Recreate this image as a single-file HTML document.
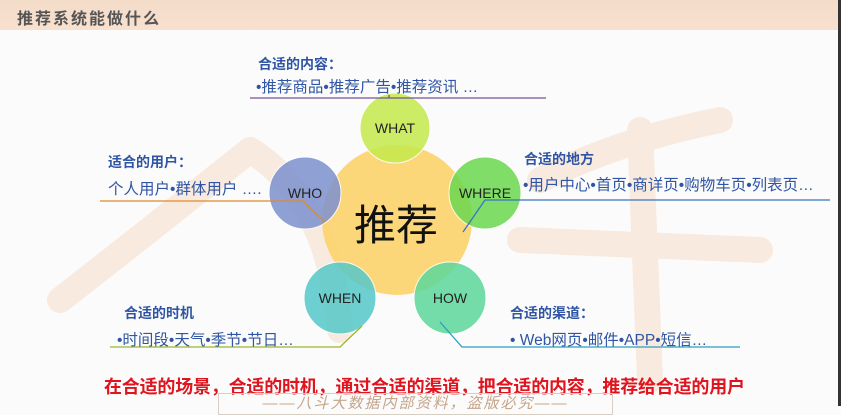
<!DOCTYPE html>
<html><head><meta charset="utf-8"><style>
body{margin:0;width:841px;height:406px;overflow:hidden;background:#fbfbfb;font-family:"Liberation Sans","Noto Sans CJK SC",sans-serif;position:relative}
.hdr{position:absolute;left:0;top:0;width:838px;height:30px;background:linear-gradient(#f3dcc8,#f8e0cf);}
.hdr span{position:absolute;left:17px;top:5px;font-size:16px;font-weight:bold;color:#555;letter-spacing:2px}
.rb{position:absolute;right:0;top:0;width:3px;height:406px;background:#333}
.t{position:absolute;white-space:nowrap;color:#2f55a4;font-size:15.5px}
.b{font-weight:bold;font-size:14px}
</style></head><body>
<div class="hdr"><span>推荐系统能做什么</span></div>
<div class="rb"></div>
<svg width="841" height="406" style="position:absolute;left:0;top:0">
<g stroke="#f7e3d3" stroke-width="26" fill="none" stroke-linecap="round" opacity="0.7">
<path d="M60 300 Q150 230 250 150"/>
<path d="M250 150 Q330 200 340 330"/>
<path d="M540 180 Q620 140 720 120"/>
<path d="M520 240 L760 250"/>
<path d="M640 130 L650 380"/>
</g>
<circle cx="397" cy="220" r="75" fill="#fcd36a" opacity="0.9"/>
<circle cx="395" cy="128" r="35" fill="#c5ea4c" opacity="0.85" stroke="#fff"/>
<circle cx="305" cy="193" r="36" fill="#7d91cf" opacity="0.85" stroke="#fff"/>
<circle cx="485" cy="193" r="36" fill="#6bd84f" opacity="0.85" stroke="#fff"/>
<circle cx="340" cy="298" r="36" fill="#55c8c8" opacity="0.85" stroke="#fff"/>
<circle cx="450" cy="298" r="36" fill="#5cd79a" opacity="0.85" stroke="#fff"/>
<g font-family="Liberation Sans" fill="#222" text-anchor="middle" font-size="14">
<text x="395" y="133">WHAT</text>
<text x="305" y="198">WHO</text>
<text x="485" y="198">WHERE</text>
<text x="340" y="303">WHEN</text>
<text x="450" y="303">HOW</text>
</g>
<text x="396" y="240" font-size="42" text-anchor="middle" fill="#111" font-family="Noto Sans CJK SC">推荐</text>
<g fill="none" stroke-width="1.3">
<path d="M250 98 L546 98 M389 95 L389 98" stroke="#7a4f96"/>
<path d="M100 201 L303 201 L325 222" stroke="#e08a2a"/>
<path d="M830 200 L485 200 L463 232" stroke="#3a74c0"/>
<path d="M110 347 L340 347 L362 326" stroke="#9ab72a"/>
<path d="M740 347 L462 347 L440 322" stroke="#2a9ec0"/>
</g>
</svg>
<div class="t b" style="left:258px;top:54px">合适的内容：</div>
<div class="t" style="left:256px;top:75px">•推荐商品•推荐广告•推荐资讯 …</div>
<div class="t b" style="left:108px;top:152px">适合的用户：</div>
<div class="t" style="left:108px;top:177px">个人用户•群体用户 ….</div>
<div class="t b" style="left:524px;top:149px">合适的地方</div>
<div class="t" style="left:523px;top:173px">•用户中心•首页•商详页•购物车页•列表页…</div>
<div class="t b" style="left:124px;top:303px">合适的时机</div>
<div class="t" style="left:117px;top:328px">•时间段•天气•季节•节日…</div>
<div class="t b" style="left:510px;top:303px">合适的渠道：</div>
<div class="t" style="left:510px;top:328px">• Web网页•邮件•APP•短信…</div>
<div style="position:absolute;left:104px;top:373px;font-size:18px;font-weight:bold;color:#e0141e;white-space:nowrap;letter-spacing:-0.2px">在合适的场景，合适的时机，通过合适的渠道，把合适的内容，推荐给合适的用户</div>
<div style="position:absolute;left:218px;top:393px;width:393px;height:20px;border:1px solid #d8cfc4;font-size:15px;color:#c4a58a;font-style:italic;text-align:center;line-height:20px;letter-spacing:2px">——八斗大数据内部资料，盗版必究——</div>
</body></html>
